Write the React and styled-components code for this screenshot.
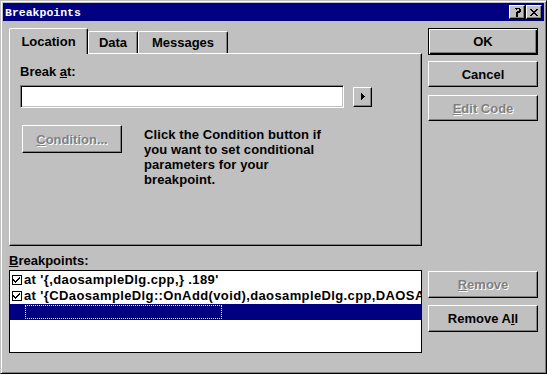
import React from "react";
import styled, { createGlobalStyle } from "styled-components";

const GlobalStyle = createGlobalStyle`
  html, body {
    margin: 0;
    padding: 0;
    background: #c0c0c0;
  }
`;

const Window = styled.div`
  box-sizing: border-box;
  width: 547px;
  height: 374px;
  background: #c0c0c0;
  border: 1px solid;
  border-color: #c0c0c0 #000 #000 #c0c0c0;
  box-shadow: inset 1px 1px #fff, inset -1px -1px #808080;
  padding: 2px;
  display: flex;
  flex-direction: column;
  font: bold 13px "Liberation Sans", Arial, sans-serif;
  color: #000;
  overflow: hidden;
`;

const TitleBar = styled.div`
  height: 18px;
  flex: none;
  background: #000080;
  display: flex;
  align-items: center;
  padding: 0 2px;
`;

const TitleText = styled.div`
  flex: 1;
  color: #fff;
  font: bold 11.5px "Liberation Mono", "Courier New", monospace;
`;

const TitleButton = styled.div`
  box-sizing: border-box;
  width: 16px;
  height: 14px;
  margin-left: ${(p) => (p.$gap ? "1px" : "0")};
  background: #c0c0c0;
  border: 1px solid;
  border-color: #fff #000 #000 #fff;
  box-shadow: inset -1px -1px #808080;
  display: flex;
  align-items: center;
  justify-content: center;
`;

const Body = styled.div`
  display: grid;
  grid-template-columns: 413px 110px;
  grid-template-rows: 218px auto;
  column-gap: 6px;
  padding: 7px 6px 0 6px;
`;

const TabStrip = styled.div`
  display: flex;
  align-items: flex-end;
  height: 25px;
`;

const Tab = styled.div`
  box-sizing: border-box;
  position: relative;
  z-index: ${(p) => (p.$active ? 1 : 0)};
  width: ${(p) => p.$w}px;
  height: ${(p) => (p.$active ? 26 : 22)}px;
  margin-bottom: ${(p) => (p.$active ? "-1px" : "0")};
  background: #c0c0c0;
  border: 1px solid;
  border-color: #fff #000 transparent #fff;
  border-bottom: none;
  border-radius: 2px 2px 0 0;
  box-shadow: inset -1px 0 #808080;
  display: flex;
  align-items: center;
  justify-content: center;
  padding-bottom: ${(p) => (p.$active ? "1px" : "0")};
`;

const Panel = styled.div`
  box-sizing: border-box;
  height: 193px;
  border: 1px solid;
  border-color: #fff #000 #000 #fff;
  box-shadow: inset -1px -1px #808080;
  padding: 10px 10px 0 10px;
`;

const Label = styled.div`
  line-height: 15px;
  height: 15px;
  white-space: nowrap;
`;

const InputRow = styled.div`
  display: flex;
  align-items: center;
  gap: 9px;
  margin-top: 6px;
`;

const TextInput = styled.div`
  box-sizing: border-box;
  width: 324px;
  height: 23px;
  background: #fff;
  border: 1px solid;
  border-color: #808080 #fff #fff #808080;
  box-shadow: inset 1px 1px #000, inset -1px -1px #c0c0c0;
`;

const Button = styled.div`
  box-sizing: border-box;
  width: ${(p) => p.$w || 110}px;
  height: ${(p) => p.$h || 26}px;
  margin-top: ${(p) => p.$mt || 0}px;
  margin-left: ${(p) => p.$ml || 0}px;
  flex: none;
  background: #c0c0c0;
  border: 1px solid;
  border-color: ${(p) => (p.$default ? "#000" : "#fff #000 #000 #fff")};
  box-shadow: ${(p) =>
    p.$default
      ? "inset 1px 1px #fff, inset -1px -1px #000, inset -2px -2px #808080"
      : "inset -1px -1px #808080"};
  display: flex;
  align-items: center;
  justify-content: center;
  white-space: nowrap;
  color: ${(p) => (p.$disabled ? "#808080" : "#000")};
  text-shadow: ${(p) => (p.$disabled ? "1px 1px 0 #fff" : "none")};
`;

const ConditionRow = styled.div`
  display: flex;
  align-items: flex-start;
  margin-top: 17px;
`;

const HelpText = styled.div`
  margin-left: 22px;
  margin-top: 2px;
  line-height: 15px;
  width: 184px;
  letter-spacing: 0.1px;
`;

const ListLabel = styled(Label)`
  margin-top: 7px;
  margin-bottom: 2px;
`;

const ListBox = styled.div`
  box-sizing: border-box;
  height: 83px;
  background: #fff;
  border: 1px solid #000;
  padding-top: 1px;
  overflow: hidden;
`;

const Row = styled.div`
  height: 16px;
  display: flex;
  align-items: center;
  padding-left: 2px;
  white-space: nowrap;
  background: ${(p) => (p.$selected ? "#000080" : "transparent")};

  svg {
    flex: none;
  }
`;

const RowText = styled.span`
  margin-left: 2px;
  line-height: 16px;
  letter-spacing: 0.38px;
`;

const FocusRect = styled.div`
  box-sizing: border-box;
  width: 197px;
  height: 14px;
  margin-left: 13px;
  border: 1px dotted #ffff80;
`;

const ButtonColumn = styled.div`
  display: flex;
  flex-direction: column;
  padding-top: ${(p) => p.$pt || 0}px;
`;

const Help = () => (
  <svg width="8" height="9" viewBox="0 0 8 9" shapeRendering="crispEdges">
    <path
      d="M1 0h6v1h1v3h-1v1h-2v2h-2v-3h1v-1h2v-2h-2v1h-3v-1h0z M3 7h2v2h-2z M1 0v2h2v-1"
      fill="#000"
    />
  </svg>
);

const Close = () => (
  <svg width="8" height="7" viewBox="0 0 8 7" shapeRendering="crispEdges">
    <path
      d="M0 0h2v1h1v1h2v-1h1v-1h2v1h-1v1h-1v1h-1v1h1v1h1v1h1v1h-2v-1h-1v-1h-2v1h-1v1h-2v-1h1v-1h1v-1h1v-1h-1v-1h-1v-1h-1z"
      fill="#000"
    />
  </svg>
);

const Arrow = () => (
  <svg width="4" height="7" viewBox="0 0 4 7" shapeRendering="crispEdges">
    <path d="M0 0h1v1h1v1h1v1h1v1h-1v1h-1v1h-1v1h-1z" fill="#000" />
  </svg>
);

const Check = () => (
  <svg width="10" height="10" viewBox="0 0 10 10" shapeRendering="crispEdges">
    <rect x="0.5" y="0.5" width="9" height="9" fill="#fff" stroke="#000" />
    <path
      d="M7 2h1v2h-1v1h-1v1h-1v1h-1v1h-1v-1h-1v-1h-1v-2h1v1h1v1h1v-1h1v-1h1z"
      fill="#000"
    />
  </svg>
);

export default function App() {
  return (
    <>
      <GlobalStyle />
      <Window>
        <TitleBar>
          <TitleText>Breakpoints</TitleText>
          <TitleButton>
            <Help />
          </TitleButton>
          <TitleButton $gap>
            <Close />
          </TitleButton>
        </TitleBar>
        <Body>
          <div>
            <TabStrip>
              <Tab $active $w={79}>Location</Tab>
              <Tab $w={50}>Data</Tab>
              <Tab $w={90}>Messages</Tab>
            </TabStrip>
            <Panel>
              <Label>
                Break <u>a</u>t:
              </Label>
              <InputRow>
                <TextInput />
                <Button $w={19} $h={20}>
                  <Arrow />
                </Button>
              </InputRow>
              <ConditionRow>
                <Button $w={100} $h={28} $ml={2} $disabled>
                  <span>
                    <u>C</u>ondition...
                  </span>
                </Button>
                <HelpText>
                  Click the Condition button if you want to set conditional
                  parameters for your breakpoint.
                </HelpText>
              </ConditionRow>
            </Panel>
          </div>
          <ButtonColumn>
            <Button $default $h={27}>OK</Button>
            <Button $mt={6}>Cancel</Button>
            <Button $mt={8} $disabled>
              <span>
                <u>E</u>dit Code
              </span>
            </Button>
          </ButtonColumn>
          <div>
            <ListLabel>
              <u>B</u>reakpoints:
            </ListLabel>
            <ListBox>
              <Row>
                <Check />
                <RowText>at '{"{"},daosampleDlg.cpp,{"}"} .189'</RowText>
              </Row>
              <Row>
                <Check />
                <RowText>
                  at '{"{"}CDaosampleDlg::OnAdd(void),daosampleDlg.cpp,DAOSAMPLE.EXE{"}"}'
                </RowText>
              </Row>
              <Row $selected>
                <FocusRect />
              </Row>
            </ListBox>
          </div>
          <ButtonColumn $pt={25}>
            <Button $h={27} $disabled>
              <span>
                <u>R</u>emove
              </span>
            </Button>
            <Button $h={27} $mt={7}>
              <span>
                Remove A<u>l</u>l
              </span>
            </Button>
          </ButtonColumn>
        </Body>
      </Window>
    </>
  );
}
